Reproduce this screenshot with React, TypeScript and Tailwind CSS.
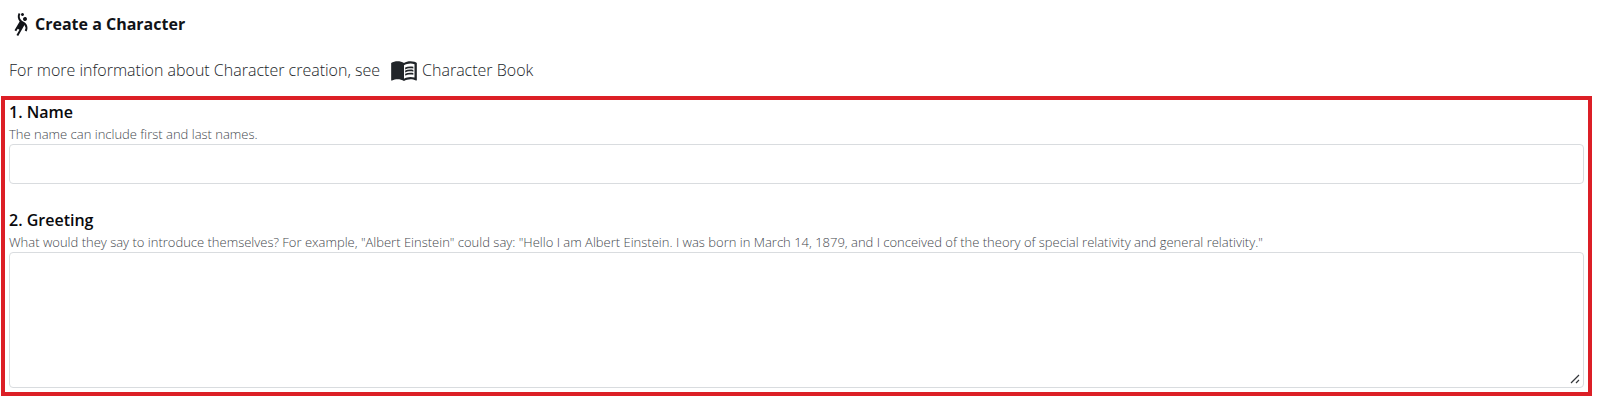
import type { ReactNode } from "react";
import { MdMenuBook, MdSportsHandball } from "react-icons/md";

type FieldProps = {
  id: string;
  title: string;
  hint: string;
  children: ReactNode;
};

function Field({ id, title, hint, children }: FieldProps) {
  return (
    <div className="flex flex-col">
      <label htmlFor={id} className="text-base leading-6 font-semibold text-[#08090c]">
        {title}
      </label>
      <p id={`${id}-hint`} className="text-[13px] leading-5 font-light text-[#45494e]">
        {hint}
      </p>
      {children}
    </div>
  );
}

export default function App() {
  return (
    <main className="bg-white pt-3 pr-2 pb-2 pl-px font-['Open_Sans','Noto_Sans',sans-serif] text-[#212529]">
      <header className="px-2">
        <h1 className="flex items-center gap-0.5 text-base leading-6 font-bold text-[#111318]">
          <MdSportsHandball className="size-6" aria-hidden="true" />
          Create a Character
        </h1>
        <p className="mt-5 flex items-center text-base leading-7 font-light">
          For more information about Character creation, see
          <a href="#character-book" className="ml-2.5 flex items-center gap-1">
            <MdMenuBook className="size-7" aria-hidden="true" />
            Character Book
          </a>
        </p>
      </header>
      <form className="mt-3 flex flex-col gap-6 border-4 border-[#dc1f26] px-1 pb-1">
        <Field id="name" title="1. Name" hint="The name can include first and last names.">
          <input
            id="name"
            type="text"
            aria-describedby="name-hint"
            className="h-10 w-full rounded border border-[#d9dcdf] px-3 outline-none"
          />
        </Field>
        <Field
          id="greeting"
          title="2. Greeting"
          hint={
            'What would they say to introduce themselves? For example, "Albert Einstein" could say: "Hello I am Albert Einstein. I was born in March 14, 1879, and I conceived of the theory of special relativity and general relativity."'
          }
        >
          <div className="relative">
            <textarea
              id="greeting"
              rows={5}
              aria-describedby="greeting-hint"
              className="block w-full resize-y rounded border border-[#d9dcdf] px-3 py-[7px] leading-6 outline-none [&::-webkit-resizer]:bg-transparent"
            />
            <svg
              viewBox="0 0 10 10"
              className="pointer-events-none absolute right-1 bottom-1 size-2.5"
              fill="none"
              stroke="#33363a"
              strokeWidth="1.2"
              aria-hidden="true"
            >
              <path d="M1 9 9 1M6 9 9 6" />
            </svg>
          </div>
        </Field>
      </form>
    </main>
  );
}
